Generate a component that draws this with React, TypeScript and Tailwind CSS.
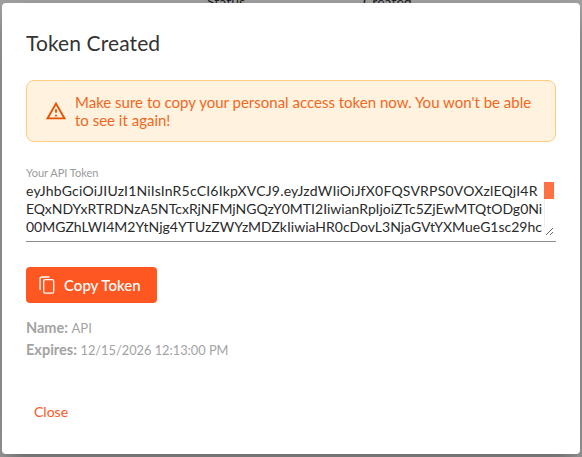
export default function App() {
  return (
    <div className="relative h-[457px] w-[582px] overflow-hidden bg-[#a6a6a6] font-['Lato','Liberation_Sans',sans-serif]">
      <div className="flex gap-[118px] pl-[207px] text-[14px] leading-[4px] text-[#222]">
        <span>Status</span>
        <span>Created</span>
      </div>
      <div className="absolute left-[2px] top-[3px] flex h-[451px] w-[578px] flex-col rounded-[4px] bg-white shadow-[0_11px_15px_-7px_rgba(0,0,0,0.2),0_24px_38px_3px_rgba(0,0,0,0.14),0_9px_46px_8px_rgba(0,0,0,0.12)]">
        <h2 className="pl-[24px] pt-[26px] text-[21px] leading-[28px] tracking-[0.1px] text-[#333]">Token Created</h2>
        <div className="mx-[24px] mt-[23px] flex h-[62px] items-center gap-[8px] rounded-[8px] border border-[#ffcc80] bg-[#fff3e0] pl-[18px] text-[15px] leading-[18px] text-[#f4661b]">
          <svg width="22" height="22" viewBox="0 0 24 24" className="shrink-0 text-[#e65100]" fill="currentColor"><path d="M12 5.99 19.53 19H4.47zM12 2 1 21h22zm1 14h-2v2h2zm0-6h-2v4h2z" /></svg>
          <p>Make sure to copy your personal access token now. You won't be able<br />to see it again!</p>
        </div>
        <label className="ml-[24px] mt-[24px] mb-[2px] block text-[11px] leading-[14px] text-[#9a9a9a]">Your API Token</label>
        <div className="relative mx-[24px] h-[60px] border-b border-[#8c8c8c]">
          <div className="h-[54px] w-[528px] resize-y overflow-hidden whitespace-pre text-[14px] leading-[18px] text-[#2a2a2a]">
            <div className="tracking-[0.2px]">eyJhbGciOiJIUzI1NiIsInR5cCI6IkpXVCJ9.eyJzdWIiOiJfX0FQSVRPS0VOXzlEQjI4R</div>
            <div>EQxNDYxRTRDNzA5NTcxRjNFMjNGQzY0MTI2IiwianRpIjoiZTc5ZjEwMTQtODg0Ni</div>
            <div>00MGZhLWI4M2YtNjg4YTUzZWYzMDZkIiwiaHR0cDovL3NjaGVtYXMueG1sc29hc</div>
          </div>
          <div className="absolute right-[2px] top-0 h-[45px] w-[10px] border-l border-[#eeeeee] bg-white">
            <div className="ml-[-1px] h-[17px] w-[10px] bg-[#ff7043]" />
          </div>
        </div>
        <button className="ml-[24px] mt-[25px] flex h-[36px] w-[131px] items-center gap-[8px] rounded-[4px] bg-[#ff5722] pl-[12px] text-[15px] font-medium text-white">
          <svg width="18" height="18" viewBox="0 0 18 18" fill="none" stroke="currentColor" strokeWidth="1.3" strokeLinejoin="round" strokeLinecap="round"><path d="M2 13.500V3a2 2 0 0 1 2-2h7" /><rect x="5.700" y="3.700" width="10" height="13.500" rx="1.500" /></svg>
          Copy Token
        </button>
        <div className="ml-[24px] mt-[14px] text-[14px] leading-[22px] text-[#a3a3a3]">
          <p><b className="text-[14.5px]">Name:</b> <span className="text-[13px]">API</span></p>
          <p><b className="text-[14.5px]">Expires:</b> <span className="text-[12.8px]">12/15/2026 12:13:00 PM</span></p>
        </div>
        <button className="ml-[32px] mt-[41px] self-start text-[14px] leading-[20px] text-[#ff5722]">Close</button>
      </div>
    </div>
  );
}
